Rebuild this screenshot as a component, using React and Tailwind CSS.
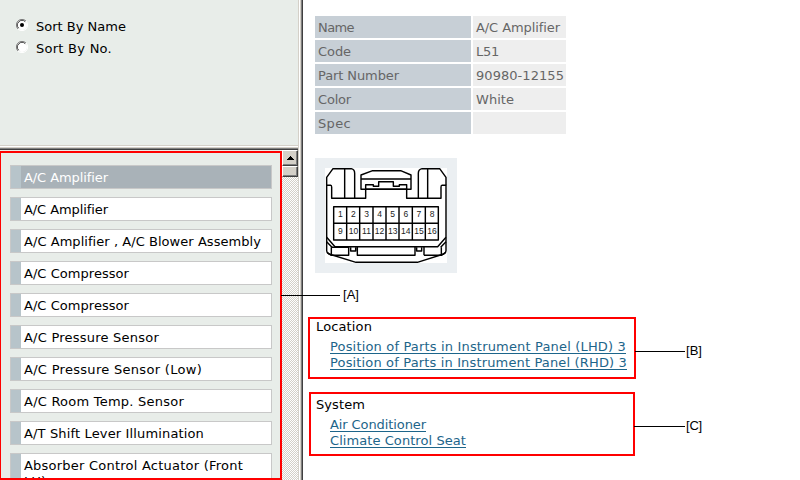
import React from 'react';

const parts = [
  ['A/C Amplifier', 84], ['A/C Amplifier', 84], ['A/C Amplifier , A/C Blower Assembly', 237],
  ['A/C Compressor', 105], ['A/C Compressor', 105], ['A/C Pressure Sensor', 135],
  ['A/C Pressure Sensor (Low)', 178], ['A/C Room Temp. Sensor', 160], ['A/T Shift Lever Illumination', 180],
];
const specs = [
  ['Name', 'A/C Amplifier', 36, 84], ['Code', 'L51', 33, 23], ['Part Number', '90980-12155', 81, 88],
  ['Color', 'White', 33, 38], ['Spec', '', 33, 0],
];

// Text justified to an exact width
function Fit({ w, children, className = '' }) {
  const ref = React.useRef(null);
  const [ls, setLs] = React.useState(0);
  React.useLayoutEffect(() => {
    const natural = ref.current.getBoundingClientRect().width;
    setLs((w - natural) / children.length);
  }, []);
  return <span ref={ref} className={`inline-block whitespace-pre ${className}`} style={{ letterSpacing: ls }}>{children}</span>;
}

function Radio({ on }) {
  return (
    <svg width="12" height="12" viewBox="0 0 12 12" className="shrink-0">
      <circle cx="6" cy="6" r="5" fill="#fff" />
      <path d="M2 10A5.5 5.5 0 0 1 10 2" fill="none" stroke="#808080" />
      <path d="M2.7 9.2A4.6 4.6 0 0 1 9.2 2.7" fill="none" stroke="#404040" />
      <path d="M10 2A5.5 5.5 0 0 1 2 10" fill="none" stroke="#fff" />
      {on && <circle cx="6" cy="6" r="2" fill="#000" />}
    </svg>
  );
}

function Connector() {
  return (
    <svg width="142" height="115" viewBox="0 0 142 115" className="block bg-[#ebeff2]">
      <rect x="10" y="10" width="122" height="95" fill="#fff" />
      <g transform="scale(.33333) translate(-15 -24)" fill="none" stroke="#000" strokeWidth="4.3" strokeLinejoin="round">
        <path d="M50 106V82L69 56H124Q134 58 134 70V145M104 56V145M408 106V82L389 56H336Q325 58 325 70V145M353 56V145" />
        <path d="M50 106H62Q65 106 65 112V145H167V118H290V145H393V112Q393 106 396 106H408V302Q408 309 401 312L322 337H138L57 312Q50 309 50 302Z" />
        <path d="M153 118V75L188 62H272L303 75V118ZM153 87H303M167 118V104H190V109H206V95H250V109H268V104H290V118" />
        <path d="M50 262L75 290H383L408 262M50 275L66 292M408 275L392 292" />
        <path d="M64 292V316M64 292H116V316H64L52 308M142 290V316H315V290M342 316H394L406 308M394 316V292M342 290V316M122 292V303H137V292M320 292V303H335V292" />
        <path d="M71 170H385V270H71ZM71 220H385M110 170V270M149 170V270M189 170V270M228 170V270M267 170V270M307 170V270M346 170V270" />
      </g>
      <g fontFamily="Liberation Sans, sans-serif" fontSize="8.5" textAnchor="middle" fill="#222">
        {Array.from({ length: 16 }, (_, i) => (
          <text key={i} x={25.3 + (i % 8) * 13.1} y={i < 8 ? 59 : 76}>{i + 1}</text>
        ))}
      </g>
    </svg>
  );
}

function Links({ title, titleWidth, items }) {
  return (
    <>
      <div className="h-4 leading-4"><Fit w={titleWidth}>{title}</Fit></div>
      <div className="mt-1 ml-3.5">
        {items.map(([t, w]) => (
          <a key={t} className="block h-4 leading-4 text-[#1d658a]"><Fit w={w} className="underline underline-offset-2 [text-decoration-skip-ink:none]">{t}</Fit></a>
        ))}
      </div>
    </>
  );
}

function Callout({ label, className, line, gap = 'ml-px' }) {
  return (
    <div className={`absolute flex h-4 items-center font-['Liberation_Sans',sans-serif] text-[13px] ${className}`}>
      <i className={`h-px bg-black ${line}`} /><span className={`leading-4 ${gap}`}><Fit w={16}>{label}</Fit></span>
    </div>
  );
}

export default function App() {
  return (
    <div className="relative flex h-[480px] w-[800px] overflow-hidden bg-white font-['DejaVu_Sans',sans-serif] text-[13px] text-black">
      <aside className="flex w-[298px] shrink-0 flex-col bg-[#e8ede9]">
        <div className="h-[145px] shrink-0 pt-4 pl-4">
          <div className="flex h-[22px] items-center"><div className="-mt-1"><Radio on /></div><span className="ml-2"><Fit w={90}>Sort By Name</Fit></span></div>
          <div className="flex h-[22px] items-center"><div className="-mt-1"><Radio /></div><span className="ml-2"><Fit w={76}>Sort By No.</Fit></span></div>
        </div>
        <div className="h-px shrink-0 bg-[#d4d0c8]" />
        <div className="h-px shrink-0 bg-white" />
        <div className="h-px shrink-0 bg-[#d4d0c8]" />
        <div className="h-px shrink-0 bg-[#808080]" />
        <div className="h-px shrink-0 bg-[#404040]" />
        <div className="flex min-h-0 flex-1 pt-px">
          <div className="w-[282px] overflow-hidden border-2 border-l border-[#f00] pt-3 pl-[9px]">
            {parts.map(([name, w], i) => (
              <div key={i} className={`mb-2 flex h-6 w-[262px] border border-[#c8c8c8] ${i === 0 ? 'bg-[#a9b2b8] text-white' : 'bg-white'}`}>
                <i className="w-2.5 bg-[#b7c4ca]" />
                <span className="ml-[3px] leading-[23px]"><Fit w={w}>{name}</Fit></span>
              </div>
            ))}
            <div className="flex h-10 w-[262px] border border-[#c8c8c8] bg-white">
              <i className="w-2.5 bg-[#b7c4ca]" />
              <div className="ml-[3px] pt-1 leading-4"><Fit w={219}>Absorber Control Actuator (Front</Fit><br />LH)</div>
            </div>
          </div>
          <div className="-mt-px w-4 bg-[repeating-conic-gradient(#d4d0c8_0_25%,#fff_0_50%)] bg-[length:2px_2px]">
            <div className="flex h-4 items-center justify-center border border-t-white border-r-[#404040] border-b-[#404040] border-l-white bg-[#d4d0c8] shadow-[inset_-1px_-1px_#808080]">
              <svg width="7" height="4" viewBox="0 0 7 4" shapeRendering="crispEdges"><path d="M3 0h1v1h1v1h1v1h1v1H0V3h1V2h1V1h1Z" /></svg>
            </div>
            <div className="h-[11px] border border-t-white border-r-[#404040] border-b-[#404040] border-l-white bg-[#d4d0c8] shadow-[inset_-1px_-1px_#808080]" />
          </div>
        </div>
      </aside>
      <div className="flex w-[5px] shrink-0">
        <i className="w-px bg-[#d4d0c8]" /><i className="w-px bg-white" /><i className="w-px bg-[#d4d0c8]" /><i className="w-px bg-[#808080]" /><i className="w-px bg-[#404040]" />
      </div>
      <main className="min-w-0 flex-1 pt-4">
        <div className="ml-3 grid w-[251px] grid-cols-[156px_93px] gap-0.5 text-[#666]">
          {specs.map(([k, v, a, b]) => (
            <React.Fragment key={k}>
              <div className="h-[22px] bg-[#c7cfd6] pl-[3px] leading-[23px]"><Fit w={a}>{k}</Fit></div>
              <div className="h-[22px] bg-[#eee] pl-[3px] leading-[23px]">{v && <Fit w={b}>{v}</Fit>}</div>
            </React.Fragment>
          ))}
        </div>
        <div className="mt-6 ml-3"><Connector /></div>
        <section className="mt-11 ml-[5px] h-[62px] w-[328px] border-2 border-[#f00] pl-1.5">
          <Links title="Location" titleWidth={56} items={[['Position of Parts in Instrument Panel (LHD) 3', 296], ['Position of Parts in Instrument Panel (RHD) 3', 297]]} />
        </section>
        <section className="mt-[13px] ml-1.5 h-16 w-[326px] border-2 border-[#f00] pt-[3px] pl-[5px]">
          <Links title="System" titleWidth={49} items={[['Air Conditioner', 96], ['Climate Control Seat', 136]]} />
        </section>
      </main>
      <Callout label="[A]" className="top-[287px] left-[281px]" line="w-[59px]" gap="ml-[3px]" />
      <Callout label="[B]" className="top-[343px] left-[635px]" line="w-[50px]" />
      <Callout label="[C]" className="top-[418px] left-[634px]" line="w-[51px]" />
    </div>
  );
}
